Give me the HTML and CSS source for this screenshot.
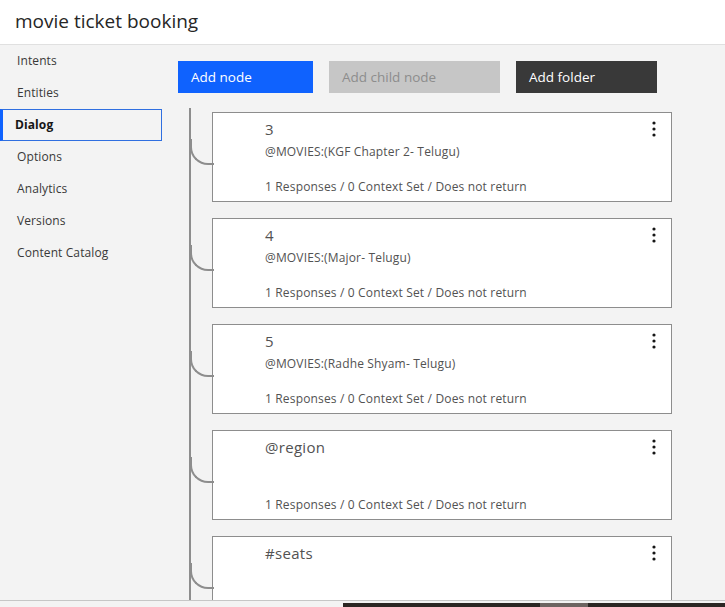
FILE: index.html
```html
<!DOCTYPE html>
<html>
<head>
<meta charset="utf-8">
<link rel="stylesheet" href="styles.css">
</head>
<body>
<div class="page">
  <header class="header"><h1 class="title">movie ticket booking</h1></header>
  <div class="content">
    <nav class="sidebar">
      <div class="nav-item">Intents</div>
      <div class="nav-item">Entities</div>
      <div class="nav-item active">Dialog</div>
      <div class="nav-item">Options</div>
      <div class="nav-item">Analytics</div>
      <div class="nav-item">Versions</div>
      <div class="nav-item">Content Catalog</div>
    </nav>
    <main class="main">
      <div class="toolbar">
        <button class="btn btn-primary">Add node</button>
        <button class="btn btn-disabled">Add child node</button>
        <button class="btn btn-dark">Add folder</button>
      </div>
      <div class="tree">
        <div class="card">
          <div class="card-title">3</div>
          <div class="card-cond">@MOVIES:(KGF Chapter 2- Telugu)</div>
          <div class="card-foot">1 Responses / 0 Context Set / Does not return</div>
          <svg class="kebab" width="4" height="16" viewBox="0 0 4 16"><circle cx="2" cy="2" r="1.6"/><circle cx="2" cy="8" r="1.6"/><circle cx="2" cy="14" r="1.6"/></svg>
        </div>
        <div class="card">
          <div class="card-title">4</div>
          <div class="card-cond">@MOVIES:(Major- Telugu)</div>
          <div class="card-foot">1 Responses / 0 Context Set / Does not return</div>
          <svg class="kebab" width="4" height="16" viewBox="0 0 4 16"><circle cx="2" cy="2" r="1.6"/><circle cx="2" cy="8" r="1.6"/><circle cx="2" cy="14" r="1.6"/></svg>
        </div>
        <div class="card">
          <div class="card-title">5</div>
          <div class="card-cond">@MOVIES:(Radhe Shyam- Telugu)</div>
          <div class="card-foot">1 Responses / 0 Context Set / Does not return</div>
          <svg class="kebab" width="4" height="16" viewBox="0 0 4 16"><circle cx="2" cy="2" r="1.6"/><circle cx="2" cy="8" r="1.6"/><circle cx="2" cy="14" r="1.6"/></svg>
        </div>
        <div class="card">
          <div class="card-title">@region</div>
          <div class="card-foot">1 Responses / 0 Context Set / Does not return</div>
          <svg class="kebab" width="4" height="16" viewBox="0 0 4 16"><circle cx="2" cy="2" r="1.6"/><circle cx="2" cy="8" r="1.6"/><circle cx="2" cy="14" r="1.6"/></svg>
        </div>
        <div class="card">
          <div class="card-title">#seats</div>
          <svg class="kebab" width="4" height="16" viewBox="0 0 4 16"><circle cx="2" cy="2" r="1.6"/><circle cx="2" cy="8" r="1.6"/><circle cx="2" cy="14" r="1.6"/></svg>
        </div>
      </div>
    </main>
  </div>
</div>
<div class="bottom">
  <div class="bottom-light"></div>
  <div class="bottom-dark"><span class="patch"></span></div>
</div>
</body>
</html>
```
FILE: styles.css
```css
* { box-sizing: border-box; }
html, body { margin: 0; padding: 0; }
body {
  width: 725px;
  height: 607px;
  overflow: hidden;
  background: #f3f3f3;
  font-family: "Open Sans", "Noto Sans", sans-serif;
  color: #161616;
}
.page {
  height: 601px;
  overflow: hidden;
  display: flex;
  flex-direction: column;
  border-bottom: 1px solid #c6c6c6;
}
.header {
  height: 45px;
  flex: none;
  background: #fff;
  border-bottom: 1px solid #e0e0e0;
  display: flex;
  align-items: center;
  padding-left: 15px;
}
.title {
  margin: 0 0 3px;
  font-size: 19px;
  font-weight: 400;
  color: #262626;
}
.content {
  flex: 1;
  display: flex;
  min-height: 0;
}
.sidebar {
  width: 162px;
  flex: none;
}
.nav-item {
  height: 32px;
  line-height: 32px;
  padding-left: 17px;
  font-size: 12px;
  letter-spacing: 0.1px;
  color: #393939;
}
.nav-item.active {
  border: 1px solid #2f6fe0;
  border-left: 3px solid #0f62fe;
  padding-left: 12px;
  line-height: 30px;
  font-weight: 700;
  color: #161616;
}
.main {
  flex: 1;
  padding-left: 16px;
}
.toolbar {
  display: flex;
  gap: 16px;
  margin-top: 16px;
}
.btn {
  height: 32px;
  border: 0;
  font-family: inherit;
  font-size: 13.5px;
  text-align: left;
  padding: 0 13px;
  color: #fff;
}
.btn-primary { width: 135px; background: #0f62fe; }
.btn-disabled { width: 171px; background: #c6c6c6; color: #8d8d8d; }
.btn-dark { width: 141px; background: #393939; }
.tree {
  margin-top: 15px;
  margin-left: 11px;
  border-left: 2px solid #8d8d8d;
  padding-left: 21px;
  padding-top: 4px;
  display: flex;
  flex-direction: column;
  gap: 16px;
}
.card {
  position: relative;
  width: 460px;
  height: 90px;
  flex: none;
  background: #fff;
  border: 1px solid #8d8d8d;
  padding: 6px 0 6px 52px;
  display: flex;
  flex-direction: column;
}
.card::before {
  content: "";
  position: absolute;
  left: -23px;
  top: 26px;
  width: 22px;
  height: 24px;
  border-left: 2px solid #8d8d8d;
  border-bottom: 2px solid #8d8d8d;
  border-bottom-left-radius: 18px;
}
.card-title {
  font-size: 15px;
  line-height: 21px;
  letter-spacing: 0.3px;
  color: #525252;
}
.card-cond {
  margin-top: 4px;
  font-size: 12px;
  line-height: 16px;
  letter-spacing: 0.16px;
  color: #525252;
}
.card-foot {
  margin-top: auto;
  font-size: 12px;
  line-height: 16px;
  letter-spacing: 0.16px;
  color: #525252;
}
.kebab {
  position: absolute;
  top: 8px;
  right: 15px;
  fill: #161616;
}
.bottom {
  height: 6px;
  display: flex;
  flex-direction: column;
}
.bottom-light { height: 2px; background: #f3f3f3; }
.bottom-dark {
  height: 4px;
  margin-left: 343px;
  background: #2b2623;
  position: relative;
}
.patch {
  position: absolute;
  left: 197px;
  top: 0;
  width: 48px;
  height: 4px;
  background: #6d6461;
}
```
